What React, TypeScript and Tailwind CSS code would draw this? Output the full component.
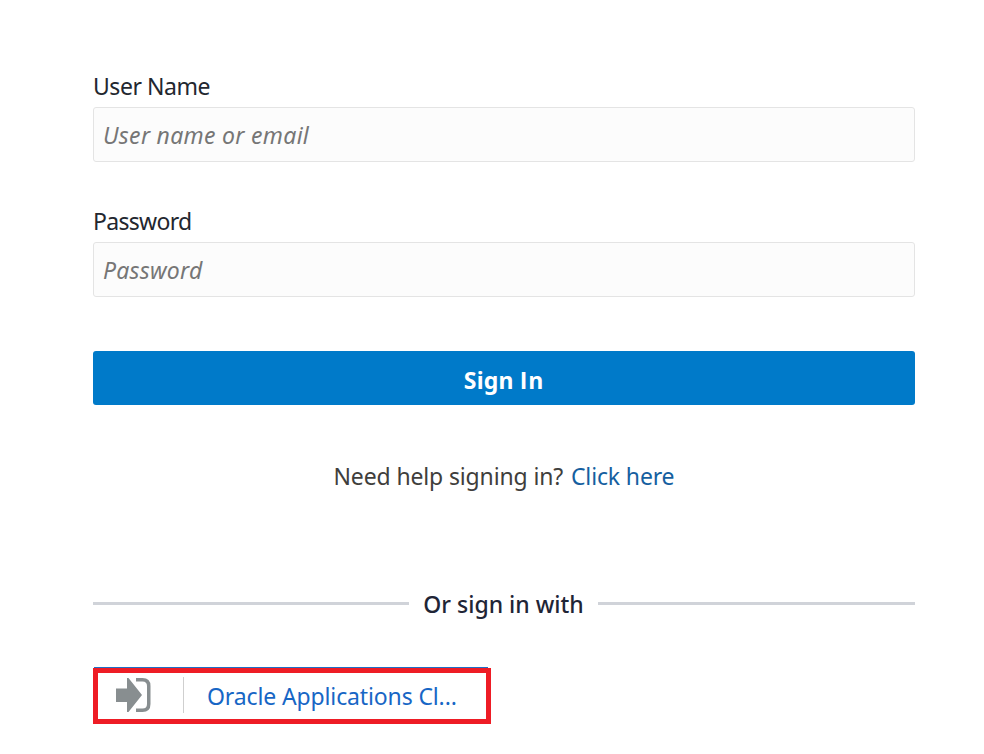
import React from "react";

function Field({ label, id, type, placeholder, labelClass, inputClass }: {
  label: string; id: string; type: string; placeholder: string; labelClass: string; inputClass: string;
}) {
  return (
    <div>
      <label htmlFor={id} className="block h-[32px] text-[23px] leading-[32px] text-[#23272f]">
        <span className={labelClass}>{label}</span>
      </label>
      <input
        id={id}
        type={type}
        placeholder={placeholder}
        className={`mt-[5px] block h-[55px] w-full rounded-[3px] border border-[#e4e4e4] bg-[#fcfcfc] pl-[9px] text-[23px] italic placeholder:text-[#767676] placeholder:opacity-100 outline-none ${inputClass}`}
      />
    </div>
  );
}

export default function App() {
  return (
    <main className="h-[754px] w-[984px] overflow-hidden bg-white pt-[70px] pr-[69px] pl-[93px] font-['Noto_Sans',sans-serif]">
      <form onSubmit={(e) => e.preventDefault()}>
        <div className="flex flex-col gap-[43px]">
          <Field label="User Name" id="user" type="text" placeholder="User name or email" labelClass="tracking-[-0.45px]" inputClass="tracking-[0.3px]" />
          <Field label="Password" id="password" type="password" placeholder="Password" labelClass="tracking-[-0.7px]" inputClass="tracking-[0.25px]" />
        </div>
        <button className="mt-[54px] flex h-[54px] w-full items-center justify-center rounded-[3px] bg-[#007ac9] pt-[4px] text-[23px] font-bold whitespace-pre text-white">
          <span className="tracking-[0.2px]">Sign <span className="font-['Open_Sans',sans-serif] tracking-[0.8px]">In</span></span>
        </button>
      </form>
      <p className="mt-[55px] text-center text-[23px] leading-[32px] tracking-[-0.14px] text-[#403e3c]">
        Need help signing in? <a className="ml-[2px] text-[#155fa0]">Click here</a>
      </p>
      <div className="mt-[96px] flex h-[32px] items-center">
        <span className="mb-[2px] h-[3px] w-[316px] bg-[#d0d3d9]" />
        <span className="flex-1 whitespace-nowrap text-center text-[23px] leading-[32px] font-medium text-[#1f2536]">Or sign in with</span>
        <span className="mb-[2px] h-[3px] w-[317px] bg-[#d0d3d9]" />
      </div>
      <div className="mt-[47px] ml-px h-px w-[394px] bg-[#1f6fc5]" />
      <a className="flex h-[56px] w-[398px] items-center border-[5px] border-[#ee1c25] text-[#1766c5]">
        <svg className="mb-[2px] ml-[18px] h-[34px] w-[35px]" viewBox="0 0 35 34" fill="none">
          <path d="M0 10.5h11V0h1.500L26 17 12.500 34H11V24H0z" fill="#888e90" />
          <path d="M20 1.750h6.500Q32.750 1.750 32.750 8v18q0 6.250-6.250 6.250H20" stroke="#888e90" strokeWidth="3.500" />
        </svg>
        <span className="mb-[2px] ml-[32px] h-[36px] w-px bg-[#cfcfcf]" />
        <span className="ml-[23px] whitespace-nowrap text-[23px] leading-[32px] tracking-[-0.13px]">Oracle Applications Cl...</span>
      </a>
    </main>
  );
}
